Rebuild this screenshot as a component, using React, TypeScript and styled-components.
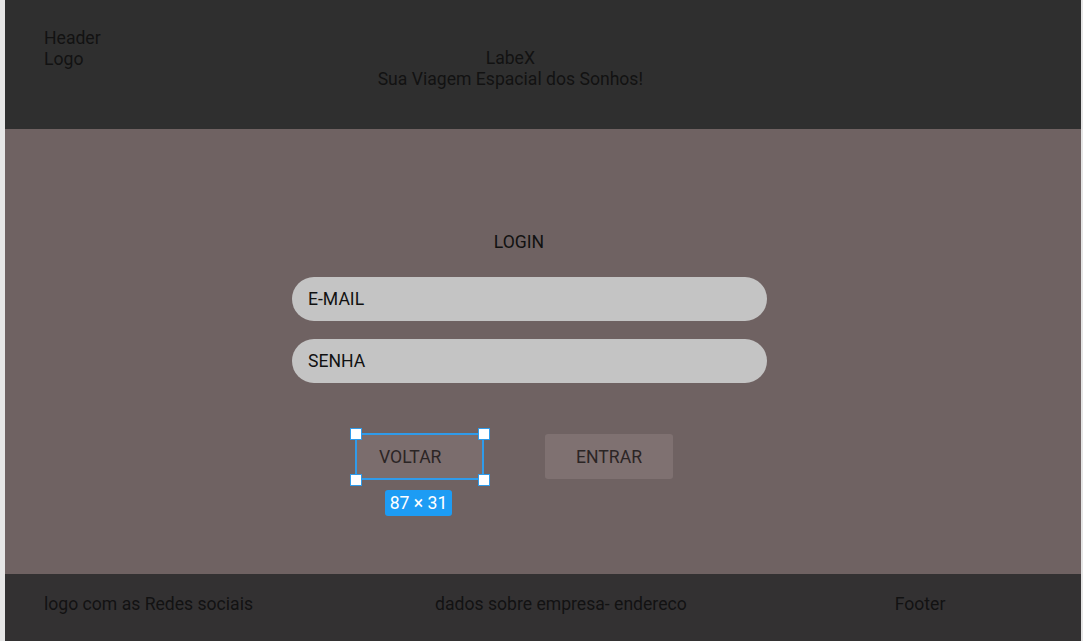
import React from "react";
import styled, { createGlobalStyle } from "styled-components";

const Global = createGlobalStyle`
  html, body { margin: 0; padding: 0; background: #e6e6e6; }
  body { font-family: Roboto, "Liberation Sans", sans-serif; }
  * { box-sizing: border-box; }
`;

const Frame = styled.div`
  margin-left: 5px;
  width: 1076px;
  height: 641px;
  display: flex;
  flex-direction: column;
`;

const Header = styled.header`
  height: 129px;
  background: #2f2f2f;
  display: flex;
  align-items: flex-start;
  color: #121212;
  font-size: 17.6px;
  line-height: 20.5px;
`;

const HeaderLeft = styled.div`
  margin-left: 39px;
  margin-top: 28px;
`;

const HeaderCenter = styled.div`
  margin-left: 277px;
  margin-top: 48px;
  text-align: center;
`;

const Main = styled.main`
  flex: 1;
  background: #6f6262;
  display: flex;
  flex-direction: column;
  align-items: flex-start;
  padding-left: 287px;
  padding-top: 103px;
`;

const Title = styled.div`
  width: 475px;
  padding-right: 21px;
  text-align: center;
  font-size: 17.6px;
  line-height: 20px;
  color: #111;
`;

const Input = styled.div<{ $top: number }>`
  margin-top: ${(p) => p.$top}px;
  width: 475px;
  height: 44px;
  border-radius: 22px;
  background: #c4c4c4;
  display: flex;
  align-items: center;
  padding-left: 16px;
  font-size: 17.6px;
  color: #111;
`;

const Buttons = styled.div`
  margin-top: 50px;
  margin-left: 63px;
  display: flex;
  align-items: center;
  gap: 61px;
`;

const Button = styled.div<{ $selected?: boolean }>`
  position: relative;
  width: ${(p) => (p.$selected ? 129 : 128)}px;
  height: ${(p) => (p.$selected ? 47 : 45)}px;
  border-radius: 3px;
  background: ${(p) => (p.$selected ? "#7b6d6d" : "#7f7171")};
  border: ${(p) => (p.$selected ? "2.5px solid #2f9bea" : "none")};
  display: flex;
  align-items: center;
  justify-content: ${(p) => (p.$selected ? "flex-start" : "center")};
  padding-left: ${(p) => (p.$selected ? 22 : 0)}px;
  font-size: 17.6px;
  color: #2b2525;
`;

const Handle = styled.span<{ $x: "left" | "right"; $y: "top" | "bottom" }>`
  position: absolute;
  width: 12px;
  height: 12px;
  background: #fff;
  border: 1.5px solid #2f9bea;
  ${(p) => p.$x}: -7.5px;
  ${(p) => p.$y}: -7.5px;
`;

const SizeLabel = styled.span`
  position: absolute;
  top: 55px;
  left: 28px;
  width: 67px;
  height: 26px;
  border-radius: 3px;
  background: #1d9cf4;
  color: #fff;
  font-size: 17.6px;
  display: flex;
  align-items: center;
  justify-content: center;
  white-space: nowrap;
`;

const Footer = styled.footer`
  height: 67px;
  background: #333132;
  display: flex;
  align-items: center;
  font-size: 17.6px;
  color: #121212;
  padding-bottom: 8px;
`;

const FooterItem = styled.div<{ $left: number }>`
  margin-left: ${(p) => p.$left}px;
  white-space: nowrap;
`;

export default function App() {
  return (
    <>
      <Global />
      <Frame>
        <Header>
          <HeaderLeft>
            Header
            <br />
            Logo
          </HeaderLeft>
          <HeaderCenter>
            LabeX
            <br />
            Sua Viagem Espacial dos Sonhos!
          </HeaderCenter>
        </Header>
        <Main>
          <Title>LOGIN</Title>
          <Input $top={25}>E-MAIL</Input>
          <Input $top={18}>SENHA</Input>
          <Buttons>
            <Button $selected>
              VOLTAR
              <Handle $x="left" $y="top" />
              <Handle $x="right" $y="top" />
              <Handle $x="left" $y="bottom" />
              <Handle $x="right" $y="bottom" />
              <SizeLabel>87 × 31</SizeLabel>
            </Button>
            <Button>ENTRAR</Button>
          </Buttons>
        </Main>
        <Footer>
          <FooterItem $left={39}>logo com as Redes sociais</FooterItem>
          <FooterItem $left={182}>dados sobre empresa- endereco</FooterItem>
          <FooterItem $left={208}>Footer</FooterItem>
        </Footer>
      </Frame>
    </>
  );
}
